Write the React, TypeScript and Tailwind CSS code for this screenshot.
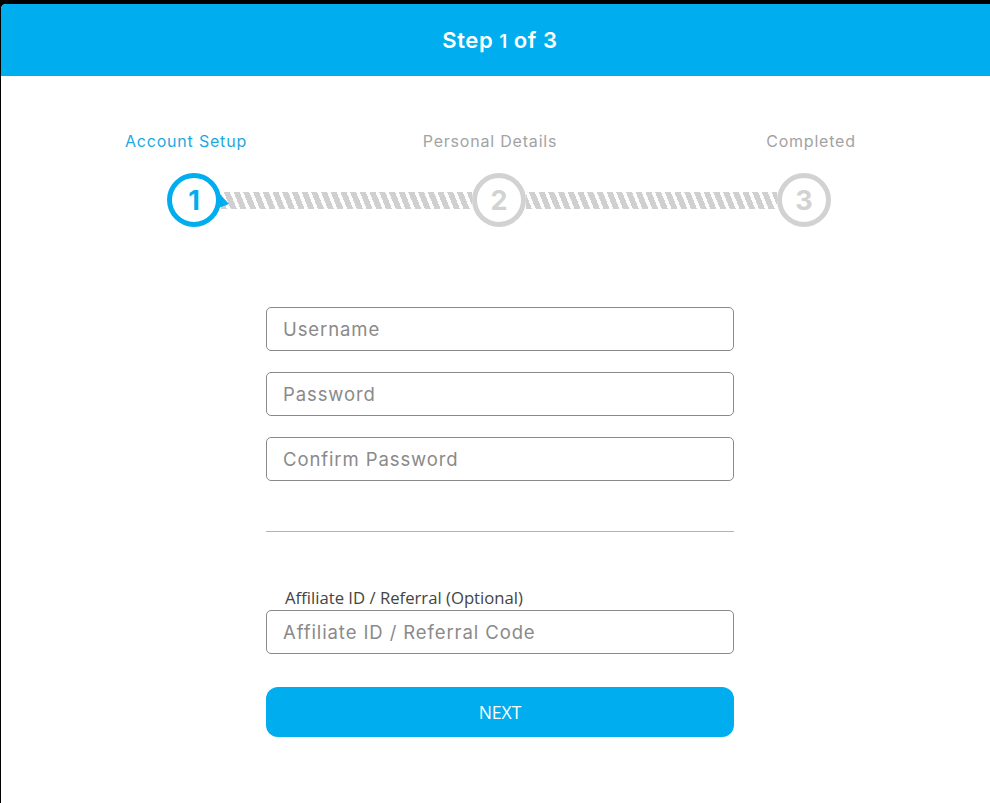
import React from "react";

const BLUE = "#00aeef";

function StepCircle({ n, active }: { n: number; active?: boolean }) {
  const c = active ? BLUE : "#d2d2d2";
  return (
    <div className="relative w-[54px] h-[54px] shrink-0">
      <svg width="54" height="54" viewBox="0 0 54 54" className="absolute inset-0 overflow-visible">
        {active && <polygon points="50,18 62,31 46,37" fill={c} />}
        <circle cx="27" cy="27" r="24.5" fill="white" stroke={c} strokeWidth="5" />
      </svg>
      <div
        className="absolute inset-0 flex items-center justify-center text-[27px] font-bold leading-none"
        style={{ color: c, fontFamily: "Inter, 'Noto Sans', sans-serif" }}
      >
        {n}
      </div>
    </div>
  );
}

function Bar() {
  return (
    <div className="w-[251px] h-[17px] shrink-0 bg-[repeating-linear-gradient(68deg,#d0d0d0_0px,#d0d0d0_5.6px,transparent_5.6px,transparent_9px)]" />
  );
}

function Field({ placeholder }: { placeholder: string }) {
  return (
    <input
      placeholder={placeholder}
      className="w-[468px] h-[44px] rounded-[5px] border border-[#8a8a8a] px-[16px] text-[18.5px] tracking-[0.9px] text-[#555] placeholder:text-[#8a8a8a] outline-none bg-white font-['Inter','Noto_Sans',sans-serif]"
    />
  );
}

export default function App() {
  return (
    <div className="min-h-screen bg-black pt-[4px] pl-[1px] overflow-hidden">
      <div className="w-[998px] min-h-[799px] bg-white rounded-t-[5px] overflow-hidden font-['Inter','Noto_Sans',sans-serif]">
        <div className="h-[72px] bg-[#00aeef] flex items-center justify-center">
          <h1 className="text-white text-[22px] font-semibold tracking-[0.6px]">
            Step <span className="text-[18px]">1</span> of 3
          </h1>
        </div>

        <div className="flex pl-[85px] mt-[55px] text-[16px] leading-[20px] tracking-[0.8px]">
          <div className="w-[200px] text-center text-[#1fa8df]">Account Setup</div>
          <div className="w-[200px] ml-[104px] text-center text-[#a3a3a3]">Personal Details</div>
          <div className="w-[200px] ml-[121px] text-center text-[#a3a3a3]">Completed</div>
        </div>

        <div className="flex items-center pl-[166px] mt-[22px]">
          <StepCircle n={1} active />
          <Bar />
          <StepCircle n={2} />
          <Bar />
          <StepCircle n={3} />
        </div>

        <div className="w-[468px] mx-auto mt-[80px] flex flex-col">
          <div className="flex flex-col gap-[21px]">
            <Field placeholder="Username" />
            <Field placeholder="Password" />
            <Field placeholder="Confirm Password" />
          </div>

          <div className="h-px bg-[#b3b3b3] mt-[50px]" />

          <label className="mt-[55px] pl-[19px] text-[16.7px] leading-[22px] text-[#444] font-['Open_Sans','Noto_Sans',sans-serif]">
            Affiliate ID / Referral (Optional)
          </label>
          <div className="mt-[1px]">
            <Field placeholder="Affiliate ID / Referral Code" />
          </div>

          <button className="mt-[33px] h-[50px] rounded-[12px] bg-[#00aeef] text-white text-[17.5px] font-['Open_Sans','Noto_Sans',sans-serif]">
            NEXT
          </button>
        </div>
      </div>
    </div>
  );
}
